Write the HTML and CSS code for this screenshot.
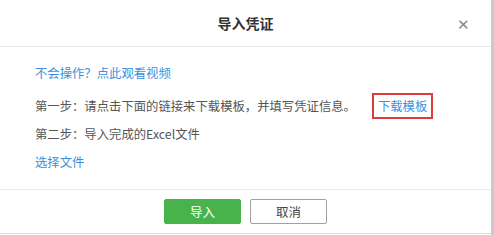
FILE: index.html
```html
<!DOCTYPE html>
<html lang="zh-CN">
<head>
    <meta charset="UTF-8">
    <title>导入凭证</title>
    <link rel="stylesheet" href="styles.css">
</head>
<body>
<div class="page">
    <div class="dialog">
        <div class="dlg-head">
            <span class="dlg-title">导入凭证</span>
            <span class="dlg-close">&#x2715;</span>
        </div>
        <div class="dlg-body">
            <div class="row"><a class="link">不会操作？点此观看视频</a></div>
            <div class="row row-step1">
                第一步：请点击下面的链接来下载模板，并填写凭证信息。
                <a class="link boxed">下载模板</a>
            </div>
            <div class="row">第二步：导入完成的Excel文件</div>
            <div class="row"><a class="link">选择文件</a></div>
        </div>
        <div class="dlg-foot">
            <button class="btn btn-ok">导入</button>
            <button class="btn btn-cancel">取消</button>
        </div>
    </div>
    <div class="scroll-edge"></div>
</div>
</body>
</html>
```

FILE: styles.css
```css
body {
    margin: 0;
    background: #fff;
    font-family: "Microsoft YaHei", "Noto Sans CJK SC", sans-serif;
}
.page {
    display: flex;
    height: 235px;
}
.dialog {
    width: 491px;
}
.scroll-edge {
    width: 3px;
    background: #cbcbcb;
}
.dlg-head {
    position: relative;
    height: 46px;
    border-bottom: 1px solid #e8e8e8;
    display: flex;
    align-items: center;
    justify-content: center;
}
.dlg-title {
    font-size: 14px;
    font-weight: bold;
    color: #333;
}
.dlg-close {
    position: absolute;
    right: 21px;
    top: 13px;
    font-size: 15px;
    color: #888;
}
.dlg-body {
    padding: 12px 0 13px 35px;
    font-size: 12.35px;
    color: #555;
}
.row {
    height: 28px;
    line-height: 28px;
    display: flex;
    align-items: center;
}
.row-step1 {
    margin: 5px 0 0;
}
.link {
    color: #3d8fde;
    text-decoration: none;
}
.boxed {
    margin-left: 16px;
    padding: 0 4px;
    height: 22px;
    line-height: 22px;
    border: 2px solid #e03b3b;
}
.dlg-foot {
    height: 43px;
    border-top: 1px solid #eaeaea;
    border-bottom: 1px solid #dcdcdc;
    display: flex;
    align-items: center;
    justify-content: center;
    gap: 9px;
}
.btn {
    width: 77px;
    height: 25px;
    font-family: inherit;
    font-size: 12.5px;
    border-radius: 2px;
    padding: 0;
}
.btn-ok {
    background: #48b34a;
    border: 1px solid #48b34a;
    color: #fff;
}
.btn-cancel {
    background: #fff;
    border: 1px solid #a0a0a0;
    color: #444;
}
```
